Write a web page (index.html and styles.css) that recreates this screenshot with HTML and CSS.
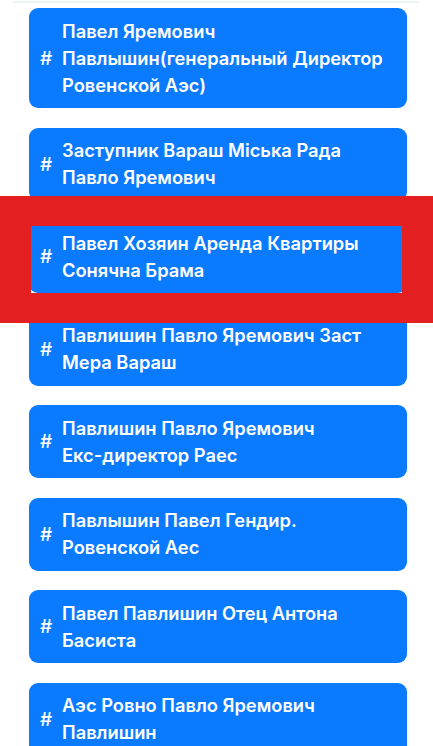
FILE: index.html
```html
<!DOCTYPE html>
<html lang="ru">
  <head>
    <meta charset="UTF-8" />
    <meta name="viewport" content="width=device-width, initial-scale=1.0" />
    <title>Теги</title>
    <link rel="stylesheet" href="styles.css">
  </head>
  <body>
    <div class="top-line"></div>
    <ul class="tags">
      <li class="tag"><span class="hash">#</span><span class="label">Павел Яремович<br>Павлышин(генеральный Директор<br>Ровенской Аэс)</span></li>
      <li class="tag"><span class="hash">#</span><span class="label">Заступник Вараш Міська Рада<br>Павло Яремович</span></li>
      <li class="tag"><span class="hash">#</span><span class="label">Павел Хозяин Аренда Квартиры<br>Сонячна Брама</span></li>
      <li class="tag"><span class="hash">#</span><span class="label">Павлишин Павло Яремович Заст<br>Мера Вараш</span></li>
      <li class="tag"><span class="hash">#</span><span class="label">Павлишин Павло Яремович<br>Екс-директор Раес</span></li>
      <li class="tag"><span class="hash">#</span><span class="label">Павлышин Павел Гендир.<br>Ровенской Аес</span></li>
      <li class="tag"><span class="hash">#</span><span class="label">Павел Павлишин Отец Антона<br>Басиста</span></li>
      <li class="tag"><span class="hash">#</span><span class="label">Аэс Ровно Павло Яремович<br>Павлишин</span></li>
    </ul>
    <div class="mark"></div>
  </body>
</html>
```

FILE: styles.css
```css
html,
body {
  margin: 0;
  background: #fff;
  overflow: hidden;
}

body {
  position: relative;
  height: 746px;
  font-family: Inter, "Noto Sans", sans-serif;
}

.top-line {
  height: 2px;
  margin: 1px 14px 0 13px;
  background: #eef1f5;
}

.tags {
  list-style: none;
  margin: 5px 0 0 29px;
  padding: 0;
  width: 378px;
  display: flex;
  flex-direction: column;
  gap: 19.5px;
}

.tag {
  display: flex;
  align-items: center;
  padding: 9.5px 10px 9.5px 11px;
  background: #0a7bff;
  border-radius: 9px;
  color: #fff;
}

.hash {
  width: 22px;
  flex: none;
  font-size: 19px;
  font-weight: 500;
}

.label {
  font-size: 18.3px;
  font-weight: 600;
  line-height: 27px;
}

/* red frame drawn over the third entry */
.mark {
  position: absolute;
  top: 196px;
  left: 0;
  width: 433px;
  height: 127px;
  box-sizing: border-box;
  border: 30px solid #e31f22;
  border-left-width: 31px;
  border-right-width: 31px;
}
```
